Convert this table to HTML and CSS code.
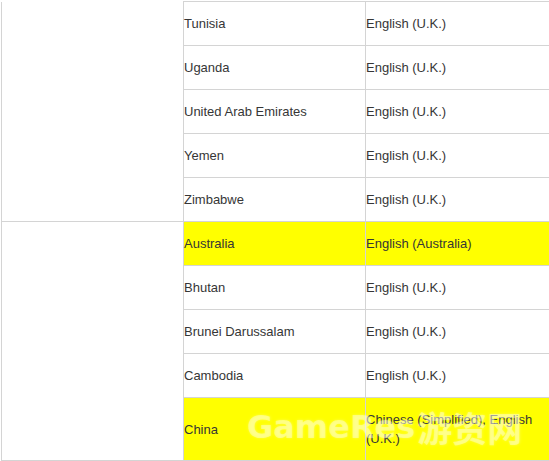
FILE: index.html
```html
<!DOCTYPE html>
<html>
<head>
<meta charset="utf-8">
<link rel="stylesheet" href="styles.css">
</head>
<body>
<div class="page">
  <table class="regions">
    <colgroup>
      <col class="c1"><col class="c2"><col class="c3">
    </colgroup>
    <tbody>
      <tr>
        <td class="group cont" rowspan="5"></td>
        <td>Tunisia</td>
        <td>English (U.K.)</td>
      </tr>
      <tr><td>Uganda</td><td>English (U.K.)</td></tr>
      <tr><td>United Arab Emirates</td><td>English (U.K.)</td></tr>
      <tr><td>Yemen</td><td>English (U.K.)</td></tr>
      <tr><td>Zimbabwe</td><td>English (U.K.)</td></tr>
      <tr class="hl">
        <td class="group" rowspan="5"></td>
        <td>Australia</td>
        <td>English (Australia)</td>
      </tr>
      <tr><td>Bhutan</td><td>English (U.K.)</td></tr>
      <tr><td>Brunei Darussalam</td><td>English (U.K.)</td></tr>
      <tr><td>Cambodia</td><td>English (U.K.)</td></tr>
      <tr class="hl"><td>China</td><td>Chinese (Simplified), English (U.K.)</td></tr>
    </tbody>
  </table>
  <div class="watermark"><span class="wm-latin">GameRes</span><span class="wm-cjk">游资网</span></div>
</div>
</body>
</html>
```

FILE: styles.css
```css
html, body {
  margin: 0;
  padding: 0;
  background: #ffffff;
}

.page {
  position: relative;
  padding: 1px 0 0 1px;
  width: 548px;
}

.regions {
  border-collapse: collapse;
  table-layout: fixed;
  width: 548px;
  font-family: "Liberation Sans", Arial, sans-serif;
  font-size: 13px;
  color: #363636;
}

.c1 { width: 182px; }
.c2 { width: 182px; }
.c3 { width: 184px; }

.regions td {
  border: 1px solid #d4d4d4;
  padding: 12px 2px 12px 0;
  line-height: 19px;
  vertical-align: middle;
  text-align: left;
}

.regions td.cont {
  border-top: none;
}

.regions tr.hl td:not(.group) {
  background: #ffff00;
}

.watermark {
  position: absolute;
  left: 247px;
  top: 407px;
  display: flex;
  align-items: center;
  gap: 2px;
  color: rgba(255, 255, 255, 0.38);
  text-shadow: 0 0 3px rgba(255, 255, 255, 0.3);
  pointer-events: none;
  white-space: nowrap;
}

.wm-latin {
  font-family: "DejaVu Sans", sans-serif;
  font-weight: bold;
  font-size: 32px;
  line-height: 40px;
}

.wm-cjk {
  font-family: "Noto Sans CJK SC", sans-serif;
  font-weight: bold;
  font-size: 35px;
  line-height: 40px;
}
```
